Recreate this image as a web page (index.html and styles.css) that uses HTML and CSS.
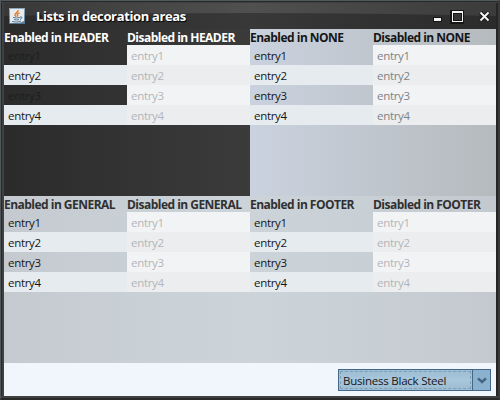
FILE: index.html
```html
<!DOCTYPE html>
<html lang="en">
<head>
<meta charset="utf-8">
<title>Lists in decoration areas</title>
<link rel="stylesheet" href="styles.css">
</head>
<body>
<div class="window">
  <header class="titlebar">
    <svg class="gloss" width="492" height="26" viewBox="0 0 492 26" preserveAspectRatio="none">
      <defs><linearGradient id="shine"><stop offset="0" stop-color="#383838"/><stop offset=".5" stop-color="#505050"/><stop offset="1" stop-color="#3b3b3b"/></linearGradient></defs>
      <path d="M0 0H492V13Q370 10 246 10Q120 10 0 13Z" fill="url(#shine)"/>
    </svg>
    <svg class="app-icon" width="16" height="16" viewBox="0 0 16 16">
      <defs><linearGradient id="tile" x2="0" y2="1"><stop stop-color="#8faabd"/><stop offset="1" stop-color="#54758f"/></linearGradient></defs>
      <rect width="16" height="16" fill="url(#tile)"/>
      <path d="M1 1H15V13Q12 15 8 15H1Z" fill="#e6ebef"/>
      <path d="M9 2C10 4 5.500 5 6 7C6 8 7 8 7 9M10.500 5C7.500 6 8 7 9 8.500" fill="none" stroke="#e47b24" stroke-width="1.400"/>
      <path d="M4 9.500Q7 10.500 11 9.500M5 11.500Q8 12.500 10 11.500M11 9Q14 8.500 12.500 10.500L11 11.500M3 13.500Q8 15 12 13" fill="none" stroke="#567590"/>
    </svg>
    <h1 class="title">Lists in decoration areas</h1>
    <svg class="controls" width="62" height="18" viewBox="0 0 62 18" shape-rendering="crispEdges">
      <g fill="#161616"><rect x="3" y="10" width="9" height="5"/><rect x="20" y="3" width="14" height="14"/></g>
      <rect x="4" y="11" width="7" height="3" fill="#f2f2f2"/>
      <path d="M22 4H33V15H22ZM23 6V14H32V6Z" fill="#f2f2f2" fill-rule="evenodd"/>
      <rect x="24" y="7" width="7" height="6" fill="#333"/>
      <g fill="none" shape-rendering="auto"><path d="M50.500 5.500L58.500 13.500M58.500 5.500L50.500 13.500" stroke="#161616" stroke-width="4"/><path d="M50.500 5.500L58.500 13.500M58.500 5.500L50.500 13.500" stroke="#f2f2f2" stroke-width="2"/></g>
    </svg>
  </header>
  <main class="areas">
    <section class="area header-area">
      <div class="column"><h2>Enabled in HEADER</h2><ul class="list enabled"><li>entry1</li><li>entry2</li><li>entry3</li><li>entry4</li></ul></div>
      <div class="column"><h2>Disabled in HEADER</h2><ul class="list disabled"><li>entry1</li><li>entry2</li><li>entry3</li><li>entry4</li></ul></div>
    </section>
    <section class="area none-area">
      <div class="column"><h2>Enabled in NONE</h2><ul class="list enabled"><li>entry1</li><li>entry2</li><li>entry3</li><li>entry4</li></ul></div>
      <div class="column"><h2>Disabled in NONE</h2><ul class="list disabled"><li>entry1</li><li>entry2</li><li>entry3</li><li>entry4</li></ul></div>
    </section>
    <section class="area general-area">
      <div class="column"><h2>Enabled in GENERAL</h2><ul class="list enabled"><li>entry1</li><li>entry2</li><li>entry3</li><li>entry4</li></ul></div>
      <div class="column"><h2>Disabled in GENERAL</h2><ul class="list disabled"><li>entry1</li><li>entry2</li><li>entry3</li><li>entry4</li></ul></div>
    </section>
    <section class="area footer-area">
      <div class="column"><h2>Enabled in FOOTER</h2><ul class="list enabled"><li>entry1</li><li>entry2</li><li>entry3</li><li>entry4</li></ul></div>
      <div class="column"><h2>Disabled in FOOTER</h2><ul class="list disabled"><li>entry1</li><li>entry2</li><li>entry3</li><li>entry4</li></ul></div>
    </section>
  </main>
  <footer class="bottom">
    <div class="combo">
      <div class="value"><span>Business Black Steel</span></div>
      <div class="arrow"><svg width="10" height="7" viewBox="0 0 10 7"><path d="M1 1.300L5 5L9 1.300" fill="none" stroke="#456581" stroke-width="2.500"/></svg></div>
    </div>
  </footer>
</div>
</body>
</html>
```
FILE: styles.css
```css
* { box-sizing: border-box; }
body { margin: 0; overflow: hidden; }
.window {
  width: 500px;
  height: 400px;
  display: flex;
  flex-direction: column;
  border: solid;
  border-width: 1px 2px 2px 1px;
  border-color: #50585b #393939 #292929 #50585b;
  padding: 2px 2px 2px 3px;
  background:
    linear-gradient(#292929, #292929) 0 0 / 100% 1px no-repeat,
    linear-gradient(#404040, #404040) 0 1px / 100% 1px no-repeat,
    linear-gradient(90deg, #292929 1px, #404040 1px 50%, #262626 50%) 0 0 / 100% 395px no-repeat,
    #404040;
  font-family: "Open Sans", "Noto Sans", sans-serif;
  font-size: 11.5px;
  color: #161616;
}
.titlebar {
  position: relative;
  height: 26px;
  flex: none;
  display: flex;
  align-items: flex-start;
  padding: 5px 4px 0 5px;
  background: linear-gradient(90deg, #2b2b2b, #383838 50%, #2b2b2b);
}
.gloss { position: absolute; left: 0; top: 0; }
.app-icon { position: relative; flex: none; }
.title {
  position: relative;
  flex: 1;
  margin: 0 0 0 11px;
  font-size: 13px;
  line-height: 16px;
  letter-spacing: -0.36px;
  white-space: nowrap;
  color: #fff;
  text-shadow: 1px 1px 1px #000;
}
.controls { position: relative; flex: none; margin: -1px 0 0; }
.areas {
  display: grid;
  grid-template-columns: 246px 246px;
  grid-template-rows: 167px 167px;
}
.area { display: grid; grid-template-columns: 123px 123px; }
.header-area { background: linear-gradient(90deg, #2b2b2b, #3b3b3b); }
.none-area { background: linear-gradient(90deg, #cad2df, #b5babd); }
.general-area { background: linear-gradient(90deg, #c4cad0, #ccd4da); }
.footer-area { background: linear-gradient(90deg, #ccd4da, #c3c9cf); }
.area h2 {
  margin: 0;
  height: 16px;
  font-size: 12px;
  line-height: 17px;
  letter-spacing: -0.52px;
  white-space: nowrap;
}
.header-area h2 { color: #fff; }
.general-area h2, .footer-area h2 { color: #303030; }
.list { margin: 0; padding: 0; list-style: none; }
.list li { height: 20px; padding-left: 4px; line-height: 22px; letter-spacing: -0.3px; }
.enabled li:nth-child(even) { background: #e6ebef; }
.header-area .enabled li:nth-child(odd) { color: #1c1f20; }
.disabled li { background: #f1f3f5; color: #b3b6ba; }
.disabled li:nth-child(even) { background: #ebedef; }
.none-area .disabled li { color: #808386; }
.bottom {
  height: 33px;
  flex: none;
  display: flex;
  justify-content: flex-end;
  padding: 6px 5px 0 0;
  background: #f0f6fb;
}
.combo {
  width: 153px;
  height: 22px;
  display: flex;
  border: 1px solid #45678a;
  background: linear-gradient(#9bbdd3, #a9c6dc 50%, #9bbcd2);
}
.value { width: 133px; padding: 1px; }
.value span {
  display: block;
  height: 18px;
  padding-left: 2px;
  border: 1px dashed #819fb5;
  line-height: 18px;
  letter-spacing: -0.23px;
  white-space: nowrap;
}
.arrow {
  flex: 1;
  display: flex;
  align-items: center;
  justify-content: center;
  border-left: 1px solid #45678a;
  background: #8ab1ce;
}
```
